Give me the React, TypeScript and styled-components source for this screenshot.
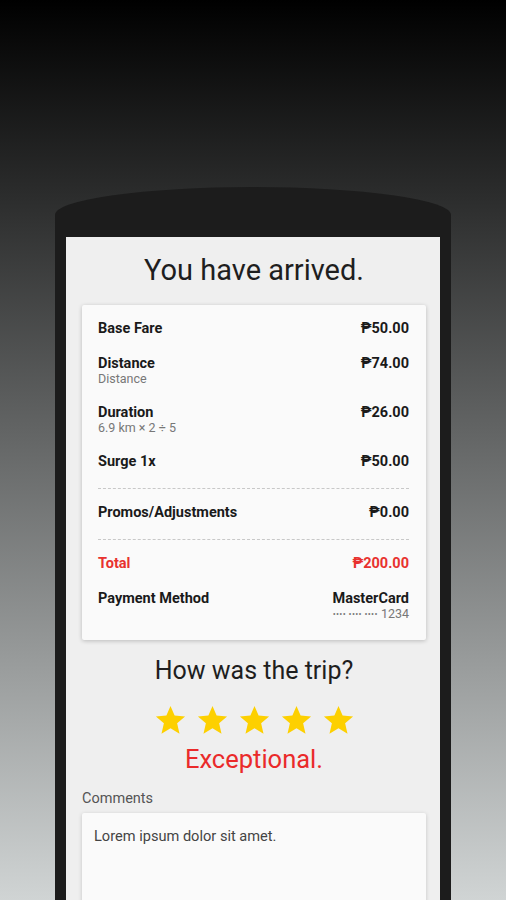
import styled, { createGlobalStyle } from 'styled-components';

const GlobalStyle = createGlobalStyle`
  html, body {
    margin: 0;
    padding: 0;
  }
  body {
    font-family: Roboto, "Noto Sans", "DejaVu Sans", sans-serif;
    background: #000;
  }
`;

interface FareItem {
  label: string;
  amount: string;
  note?: string;
}

const fares: FareItem[] = [
  { label: 'Base Fare', amount: '₱50.00' },
  { label: 'Distance', amount: '₱74.00', note: 'Distance' },
  { label: 'Duration', amount: '₱26.00', note: '6.9 km × 2 ÷ 5' },
  { label: 'Surge 1x', amount: '₱50.00' },
];

const App = () => {
  return (
    <>
      <GlobalStyle />
      <Page>
        <Phone>
          <Screen>
            <Title>You have arrived.</Title>

            <Receipt>
              <Section>
                {fares.map((f) => (
                  <Row key={f.label}>
                    <Left>
                      <Label>{f.label}</Label>
                      {f.note && <Note>{f.note}</Note>}
                    </Left>
                    <Amount>{f.amount}</Amount>
                  </Row>
                ))}
              </Section>

              <Section $dashed>
                <Row>
                  <Label>Promos/Adjustments</Label>
                  <Amount>₱0.00</Amount>
                </Row>
              </Section>

              <Section $dashed $last>
                <Row>
                  <Label $red>Total</Label>
                  <Amount $red>₱200.00</Amount>
                </Row>
                <Row>
                  <Label>Payment Method</Label>
                  <Right>
                    <Amount>MasterCard</Amount>
                    <Note>
                      <Dots>•••• •••• ••••</Dots> 1234
                    </Note>
                  </Right>
                </Row>
              </Section>
            </Receipt>

            <Question>How was the trip?</Question>
            <Stars>
              {[0, 1, 2, 3, 4].map((i) => (
                <Star key={i} viewBox="0 0 24 24">
                  <path d="M12 17.27L18.18 21l-1.64-7.03L22 9.24l-7.19-.61L12 2 9.19 8.63 2 9.24l5.46 4.73L5.82 21z" />
                </Star>
              ))}
            </Stars>
            <Verdict>Exceptional.</Verdict>

            <FieldLabel>Comments</FieldLabel>
            <Comments readOnly defaultValue="Lorem ipsum dolor sit amet." />
          </Screen>
        </Phone>
      </Page>
    </>
  );
};

const Page = styled.div`
  height: 900px;
  overflow: hidden;
  padding-top: 187px;
  box-sizing: border-box;
  background: linear-gradient(180deg, #000 0%, #2c2d2d 22%, #d0d4d4 100%);
`;

const Phone = styled.div`
  width: 396px;
  margin: 0 0 0 55px;
  padding: 50px 11px 0;
  box-sizing: border-box;
  min-height: 760px;
  background: #1c1c1c;
  border-top-left-radius: 50% 28px;
  border-top-right-radius: 50% 28px;
`;

const Screen = styled.div`
  background: #efefef;
  min-height: 700px;
  padding: 17px 14px 0 16px;
  display: flex;
  flex-direction: column;
`;

const Title = styled.h1`
  margin: 0;
  text-align: center;
  font-size: 29px;
  line-height: 32px;
  font-weight: 400;
  color: #1e1e1e;
`;

const Receipt = styled.div`
  margin-top: 19px;
  background: #fafafa;
  border-radius: 2px;
  box-shadow: 0 1px 4px rgba(0, 0, 0, 0.22);
  padding: 0 17px 0 16px;
`;

const Section = styled.div<{ $dashed?: boolean; $last?: boolean }>`
  display: flex;
  flex-direction: column;
  gap: 19px;
  padding: 16px 0 ${(p) => (p.$last ? '19px' : '18px')};
  border-top: ${(p) => (p.$dashed ? '1px dashed #c8c8c8' : 'none')};
`;

const Row = styled.div`
  display: flex;
  justify-content: space-between;
  align-items: flex-start;
`;

const Left = styled.div`
  display: flex;
  flex-direction: column;
`;

const Right = styled.div`
  display: flex;
  flex-direction: column;
  align-items: flex-end;
`;

const Label = styled.span<{ $red?: boolean }>`
  font-size: 14.5px;
  line-height: 16px;
  font-weight: 700;
  color: ${(p) => (p.$red ? '#e8322f' : '#1a1a1a')};
`;

const Amount = styled(Label)``;

const Note = styled.span`
  font-size: 12.5px;
  line-height: 14px;
  color: #777;
`;

const Dots = styled.span`
  font-size: 9px;
  letter-spacing: 0.3px;
  vertical-align: 1px;
`;

const Question = styled.h2`
  margin: 18px 0 0;
  text-align: center;
  font-size: 25px;
  line-height: 26px;
  font-weight: 400;
  color: #1e1e1e;
`;

const Stars = styled.div`
  margin-top: 19px;
  display: flex;
  justify-content: center;
  gap: 7px;
`;

const Star = styled.svg`
  width: 35px;
  height: 35px;
  fill: #fdd000;
`;

const Verdict = styled.div`
  margin-top: 7px;
  text-align: center;
  font-size: 25.5px;
  line-height: 28px;
  color: #ea2a2a;
`;

const FieldLabel = styled.div`
  margin-top: 18px;
  font-size: 14.5px;
  line-height: 16px;
  color: #555;
`;

const Comments = styled.textarea`
  margin-top: 6px;
  height: 140px;
  resize: none;
  border: none;
  outline: none;
  background: #fafafa;
  border-radius: 2px;
  box-shadow: 0 1px 4px rgba(0, 0, 0, 0.18);
  padding: 14px 12px;
  font-family: Roboto, "Noto Sans", sans-serif;
  font-size: 14.6px;
  line-height: 18px;
  color: #444;
`;

export default App;
